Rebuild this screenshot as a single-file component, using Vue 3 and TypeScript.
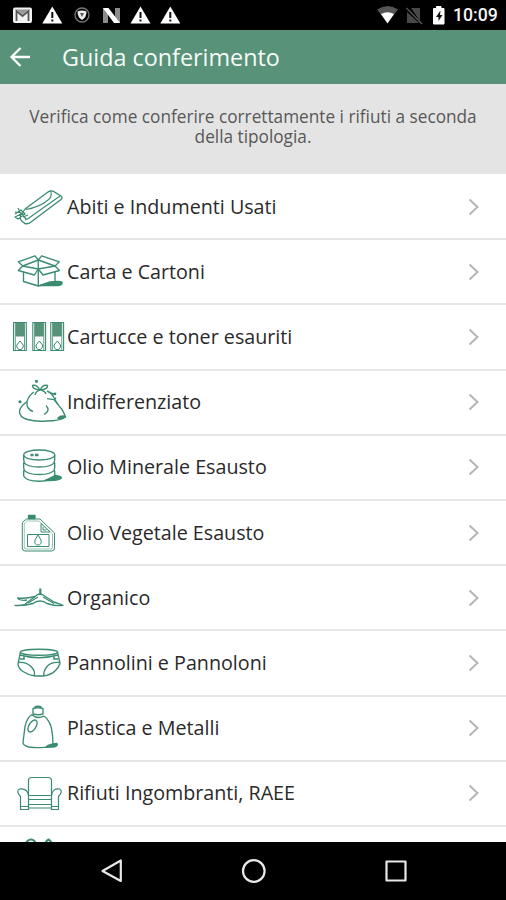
<script setup lang="ts">
interface Category {
  id: string
  label: string
}

const categories: Category[] = [
  { id: 'clothes', label: 'Abiti e Indumenti Usati' },
  { id: 'box', label: 'Carta e Cartoni' },
  { id: 'toner', label: 'Cartucce e toner esauriti' },
  { id: 'bag', label: 'Indifferenziato' },
  { id: 'drum', label: 'Olio Minerale Esausto' },
  { id: 'can', label: 'Olio Vegetale Esausto' },
  { id: 'organic', label: 'Organico' },
  { id: 'diaper', label: 'Pannolini e Pannoloni' },
  { id: 'bottle', label: 'Plastica e Metalli' },
  { id: 'chair', label: 'Rifiuti Ingombranti, RAEE' },
  { id: 'last', label: '' },
]

const cartridges: number[] = [13, 32.3, 50.3]
</script>

<template>
  <div class="screen">
    <header class="status">
      <svg class="status-left" viewBox="0 0 190 30">
        <rect x="13" y="7.5" width="19" height="15.5" rx="2" fill="#f2f2f2" />
        <path d="M16.5 21V11l6 5 6-5v10" fill="none" stroke="#555" stroke-width="1.8" />
        <path d="M16 9.5h13l-6.5 5z" fill="#999" />
        <g v-for="x in [52.3, 140.5, 170.3]" :key="x">
          <path :d="`M${x} 6.500l10 17h-20z`" fill="#fff" />
          <path :d="`M${x} 12v6M${x} 19.500v2`" stroke="#111" stroke-width="2" />
        </g>
        <circle cx="82" cy="15" r="7" fill="none" stroke="#777" stroke-width="1.3" />
        <path d="M77.500 11.500q4.500-2 9 0q0 6-4.500 8.500q-4.500-2.500-4.500-8.500z" fill="#eee" />
        <path d="M80 13h4l-2 4z" fill="#555" />
        <path d="M103 8h5v15h-5zM115 8h5v15h-5z" fill="#8b8b8b" />
        <path d="M103 8h5.500L120 23h-6z" fill="#fff" />
      </svg>
      <svg class="status-right" viewBox="0 0 76 30">
        <path d="M1 9.500q11-7 21 0L11.500 23z" fill="#555" />
        <path d="M5 14q6.500-3.500 13 0l-6.500 9.500z" fill="#fff" />
        <path d="M35 8h9v13zM31 12v11h12z" fill="#484848" />
        <path d="M30.500 8L46 24" stroke="#555" stroke-width="1.5" />
        <path d="M57.500 8.500h3V6.500h4.500v2h3v15.500H57.500z" fill="#fff" stroke="#fff" stroke-linejoin="round" />
        <path d="M64.500 10.500L60 17h2.500v4l4-6h-2.500z" fill="#111" />
      </svg>
      <span class="clock">10:09</span>
    </header>

    <nav class="appbar">
      <svg class="back" viewBox="0 0 24 24">
        <path d="M22 12H4M12.500 3L3.500 12l9 9" fill="none" stroke="#fff" stroke-width="2.3" />
      </svg>
      <h1 class="title">Guida conferimento</h1>
    </nav>

    <section class="intro">
      <p>Verifica come conferire correttamente i rifiuti a seconda<br />della tipologia.</p>
    </section>

    <main class="list">
      <div v-for="c in categories" :key="c.id" class="row">
        <svg class="icon" viewBox="0 0 67 64">
          <template v-if="c.id === 'clothes'">
            <path d="M25 34L48 17q2-1.500 5-.8l8 4.800q2 1.500 0 3.500L31 47q-3 2.500-6 1.500t-5-5" />
            <path d="M51 17q1 5-3 8-8 7-22 9.500M25 45q3-1 6-3.500L60 21M23 42l5-2" stroke-width="1.1" />
            <path d="M15 39l6-4 4 4-7 5-3-2 8-4M18 33l3 6-1 5M15 37l10 1M22 38l4-5M21 38l5 6" stroke-width="1.2" />
          </template>
          <template v-else-if="c.id === 'box'">
            <path d="M40 45.500l10-3.500q10-1 12 0 1 3-4 3.500z" class="fill" />
            <path d="M23.500 32v9.500l14.800 4.500L55 41.500V32M38.300 20v26" />
            <path d="M18.300 21.800L35 15.800 38.300 20 22.700 26zM38.300 20l3.400-4.200 17.600 6L55 26zM22.700 26l-4.400 4.500 16 4.500 4-6zM38.300 29l4.700 6 16.500-4.500L55 26z" />
          </template>
          <template v-else-if="c.id === 'toner'">
            <g v-for="x in cartridges" :key="x">
              <rect :x="x + 0.5" y="17.500" width="12.800" height="28" stroke-width="1.1" />
              <path :d="`M${x + 2.3} 18v27M${x + 11.5} 18v27`" stroke-width=".8" />
              <rect :x="x + 2.5" y="18" width="9" height="13.5" fill="#579279" stroke="none" />
              <path :d="`M${x + 3.8} 42v-2l3.200-4 3.200 4v2l-1.700 2.500h-3z`" stroke-width="1" />
            </g>
          </template>
          <template v-else-if="c.id === 'bag'">
            <path d="M34 22q-5 3-7 9.500Q20 37 19.500 41q-.5 6 8 8.500t19 1.500q14 0 19-4-1-3-4-8.300-4-4-8-12-2-4-6.500-5.700" />
            <path d="M40 20q-8-1-7.500-4.500 4-1.500 7.500 4.500 3-6 7.500-4.500.5 4-7.500 4.500zM40 20q-4 1-5 5M41 20q4 1 5 4M27 32q-1 7 6 9.500M46 35.500q5 5-2 9M50 23l6 1.500M47 28.700l7 1 2-2M54 29.700l4 5" />
            <path d="M58 48q3-3 7.500-1.500-2 3-7.500 2z" class="fill" />
            <circle cx="36.500" cy="11.300" r=".9" class="fill" /><circle cx="20" cy="31.700" r=".9" class="fill" /><circle cx="55" cy="23.800" r=".7" class="fill" />
          </template>
          <template v-else-if="c.id === 'drum'">
            <path d="M45 45.500l10-5q6 .5 6.500 2.500-2 3-16.500 2.500z" class="fill" />
            <ellipse cx="39.200" cy="20" rx="15.500" ry="5" />
            <path d="M23.700 20v5q1 1.500 0 3v5q1 1.500 0 3v5q3 5.200 15.500 5.200t15.500-5.200v-5q-1-1.500 0-3v-5q-1-1.500 0-3v-5M23.700 27q3 5 15.500 5t15.500-5M23.700 34.500q3 5 15.500 5t15.500-5" />
            <path d="M30.500 20h3M35 20h3.500" stroke-width="2.5" />
          </template>
          <template v-else-if="c.id === 'can'">
            <path d="M28.500 14.500h6.500v3h-6.500z" class="fill" />
            <g stroke-width="1">
              <path d="M26.500 18h13.500l14.500 14v15q0 3-3 3H25q-2.700 0-2.700-3V23q0-2 1.500-3z" />
              <path d="M26.500 20h12.500l13.500 13v13.500q0 1.500-2 1.500H26q-1.700 0-1.700-2V23.500q0-2 2.200-3.500z" stroke-width=".5" />
              <path d="M41 22.500v8.500h9zM43 26v3h3.500M27.500 33.500h21.500v12H27.500z" />
              <path d="M38 34l3 5q1 5-3 5t-3-5z" fill="#fff" />
            </g>
          </template>
          <template v-else-if="c.id === 'organic'">
            <path d="M14.500 39.300q6 .7 10.500-1L37 29q3-2 6 0l11 7 9 3.300q-9 1-16-1.800-3-2.500-7-2.500t-7 2.500q-9 2.500-18.500 1.800" />
            <path d="M40.300 22.500v6" stroke-width="2.2" />
            <path d="M17 32q9 1 18-1.500M18 33q4 2 9 1M28 37l10-6M43 31l11 6.500" />
          </template>
          <template v-else-if="c.id === 'diaper'">
            <ellipse cx="39" cy="21.200" rx="18.500" ry="3" />
            <path d="M20.500 21l-2.500 12q0 4 5 7.500t12 4.500h8q8-1 12-5t5-7.500l-2.500-11.500M18 31.500q8-1 13 4t3 9.500M60 31.500q-9-1-13 4t-3 9.500M20 24q19 5.500 38 0" />
            <path d="M20 28h4.500M53.500 28h4.500M24 25.500v3M54 25.500v3" stroke-width="1.6" />
          </template>
          <template v-else-if="c.id === 'bottle'">
            <path d="M33 12.500q5-1.500 10 0v5.500q-5 1.500-10 0zM34.500 11q4-1.500 7 0M32 19q5.500 4.500 12 1M32 18.500q-5 3-7 12l-2 16q0 3 6 4.500 8 1 15 .3 9 .2 9-4.300-.5-16-4-21-2-4-5-6" />
            <ellipse cx="32.500" cy="30" rx="3.500" ry="6.700" transform="rotate(32 32.500 30)" />
            <path d="M46 51q3-3 11-3.500 1.500 2.500-4 3.500z" class="fill" />
          </template>
          <template v-else-if="c.id === 'chair'">
            <g stroke-width="1.2">
              <path d="M28.500 34V19.500q0-3 3-3h17q3 0 3 3V34M29 34.500h22M29 38.500h22M29 43.500h22M29 47h22" />
              <path d="M28.500 48.500h-8V35.500q-5-5.500-1-7.500 8-1 9 6.500zM51.500 48.500h7V35.500q5-5.500 1-7.500-7-1-8 6.500zM20.500 45.500h8M51.500 45.500h7" />
            </g>
          </template>
          <template v-else>
            <path d="M26 17q2-3.500 5-3.500t4.500 3.500M45.500 17q1-2.500 3-3.500 2 1 3 3.500" stroke-width="2.2" />
          </template>
        </svg>
        <span class="label">{{ c.label }}</span>
        <svg v-if="c.label" class="chevron" viewBox="0 0 12 18">
          <path d="M1.500 1.500L9.500 9l-8 7.500" fill="none" stroke="#b5b5b5" stroke-width="2" />
        </svg>
      </div>
    </main>

    <footer class="navbar">
      <svg viewBox="0 0 506 58">
        <g fill="none" stroke="#e8e8e8" stroke-width="2.2" stroke-linejoin="round">
          <path d="M120.800 18.500v20.500L102.500 29z" />
          <circle cx="253.800" cy="29" r="10.800" />
          <rect x="386.500" y="19.500" width="19" height="19" />
        </g>
      </svg>
    </footer>
  </div>
</template>

<style>
body {
  margin: 0;
}
</style>

<style scoped>
.screen {
  width: 506px;
  height: 900px;
  display: flex;
  flex-direction: column;
  overflow: hidden;
  background: #fff;
  font-family: 'Open Sans', sans-serif;
}
.status {
  flex: none;
  height: 30px;
  display: flex;
  align-items: center;
  background: #000;
}
.status-left {
  width: 190px;
  height: 30px;
}
.status-right {
  width: 76px;
  height: 30px;
  margin-left: auto;
}
.clock {
  width: 54px;
  box-sizing: border-box;
  padding-left: 1px;
  color: #f4f4f4;
  font: 500 17.7px/33px Roboto, sans-serif;
}
.appbar {
  flex: none;
  height: 54px;
  display: flex;
  align-items: center;
  background: #579279;
}
.back {
  width: 24px;
  height: 24px;
  margin-left: 8px;
}
.title {
  margin: 0 0 0 30px;
  color: #f6fbf8;
  font-size: 23.35px;
  font-weight: 400;
  line-height: 54px;
}
.intro {
  flex: none;
  height: 90px;
  box-sizing: border-box;
  padding-top: 23px;
  background: #e4e4e4;
}
.intro p {
  margin: 0;
  text-align: center;
  color: #585858;
  font-size: 17.23px;
  line-height: 20px;
  white-space: nowrap;
}
.list {
  flex: 1;
  min-height: 0;
  box-sizing: border-box;
  padding-top: 1px;
  overflow: hidden;
}
.row {
  height: 65.2px;
  box-sizing: border-box;
  display: flex;
  align-items: center;
  border-bottom: 2px solid #e6e6e6;
}
.icon {
  flex: none;
  width: 67px;
  height: 64px;
  fill: none;
  stroke: #3b8c70;
  stroke-width: 1.35;
  stroke-linejoin: round;
}
.icon .fill {
  fill: #3b8c70;
}
.label {
  flex: 1;
  color: #2a2a2a;
  font-size: 19.7px;
  line-height: 28px;
  white-space: nowrap;
}
.chevron {
  width: 12px;
  height: 18px;
  margin-right: 26px;
}
.navbar {
  flex: none;
  height: 58px;
  background: #000;
}
.navbar svg {
  display: block;
  width: 506px;
  height: 58px;
}
</style>
